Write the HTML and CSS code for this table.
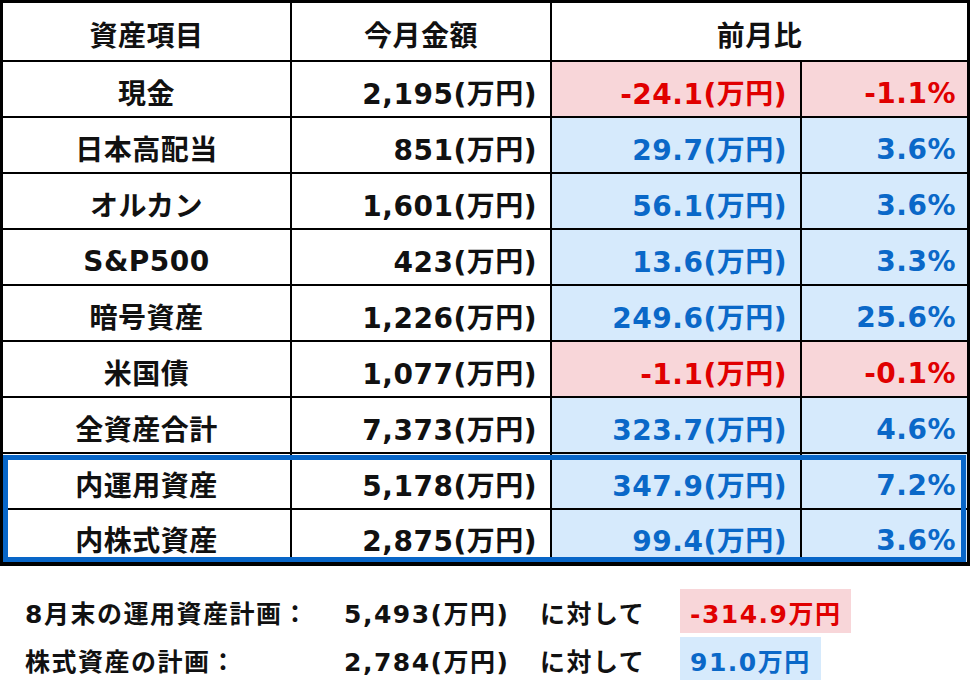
FILE: index.html
```html
<!DOCTYPE html>
<html lang="ja">
<head>
<meta charset="utf-8">
<title>資産推移</title>
<link rel="stylesheet" href="styles.css">
</head>
<body>
<div class="sheet">
  <div class="grid">
    <div class="cell head c">資産項目</div>
    <div class="cell head c">今月金額</div>
    <div class="cell head c span2">前月比</div>

    <div class="cell c">現金</div>
    <div class="cell r">2,195(万円)</div>
    <div class="cell r neg">-24.1(万円)</div>
    <div class="cell r pct neg">-1.1%</div>

    <div class="cell c">日本高配当</div>
    <div class="cell r">851(万円)</div>
    <div class="cell r pos">29.7(万円)</div>
    <div class="cell r pct pos">3.6%</div>

    <div class="cell c">オルカン</div>
    <div class="cell r">1,601(万円)</div>
    <div class="cell r pos">56.1(万円)</div>
    <div class="cell r pct pos">3.6%</div>

    <div class="cell c latin">S&amp;P500</div>
    <div class="cell r">423(万円)</div>
    <div class="cell r pos">13.6(万円)</div>
    <div class="cell r pct pos">3.3%</div>

    <div class="cell c">暗号資産</div>
    <div class="cell r">1,226(万円)</div>
    <div class="cell r pos">249.6(万円)</div>
    <div class="cell r pct pos">25.6%</div>

    <div class="cell c">米国債</div>
    <div class="cell r">1,077(万円)</div>
    <div class="cell r neg">-1.1(万円)</div>
    <div class="cell r pct neg">-0.1%</div>

    <div class="cell c">全資産合計</div>
    <div class="cell r">7,373(万円)</div>
    <div class="cell r pos">323.7(万円)</div>
    <div class="cell r pct pos">4.6%</div>

    <div class="cell c">内運用資産</div>
    <div class="cell r">5,178(万円)</div>
    <div class="cell r pos">347.9(万円)</div>
    <div class="cell r pct pos">7.2%</div>

    <div class="cell c">内株式資産</div>
    <div class="cell r">2,875(万円)</div>
    <div class="cell r pos">99.4(万円)</div>
    <div class="cell r pct pos">3.6%</div>
  </div>
  <div class="highlight"></div>
</div>

<div class="plan">
  <div class="plan-label">8月末の運用資産計画：</div>
  <div class="plan-value">5,493(万円)</div>
  <div class="plan-vs">に対して</div>
  <div class="plan-diff"><span class="badge neg-badge">-314.9万円</span></div>

  <div class="plan-label">株式資産の計画：</div>
  <div class="plan-value">2,784(万円)</div>
  <div class="plan-vs">に対して</div>
  <div class="plan-diff"><span class="badge pos-badge">91.0万円</span></div>
</div>
</body>
</html>
```

FILE: styles.css
```css
html, body {
  margin: 0;
  padding: 0;
  background: #ffffff;
}

body {
  width: 970px;
  height: 691px;
  overflow: hidden;
  font-family: "DejaVu Sans", "Noto Sans CJK JP", sans-serif;
  font-weight: bold;
  color: #111111;
}

.sheet {
  position: relative;
  width: 970px;
}

.grid {
  display: grid;
  grid-template-columns: 287px 258px 248px 165px;
  grid-template-rows: 57px repeat(8, 54px) 52px;
  gap: 2px;
  padding: 3px 3px 4px 3px;
  background: #000000;
  box-sizing: border-box;
  width: 970px;
}

.cell {
  background: #ffffff;
  display: flex;
  align-items: center;
  font-size: 28px;
  letter-spacing: 0.5px;
  padding-top: 5px;
  box-sizing: border-box;
  white-space: nowrap;
}

.cell.head {
  padding-top: 4px;
}

.cell.latin,
.cell.pct {
  padding-top: 8px;
}

.c {
  justify-content: center;
}

.r {
  justify-content: flex-end;
  padding-right: 13px;
}

.r.pct {
  padding-right: 11px;
}

.span2 {
  grid-column: span 2;
}

.neg {
  background: #f8d6d9;
  color: #e00000;
}

.pos {
  background: #d6eafc;
  color: #0a68c8;
}

.highlight {
  position: absolute;
  left: 3px;
  top: 455px;
  width: 963px;
  height: 107px;
  border: 5px solid #0866c8;
  box-sizing: border-box;
  pointer-events: none;
}

.plan {
  display: grid;
  grid-template-columns: 319px 196px 140px auto;
  grid-template-rows: 44px 43px;
  row-gap: 4px;
  margin: 23px 0 0 25px;
  font-size: 25px;
  letter-spacing: 1.5px;
  align-items: center;
  white-space: nowrap;
}

.plan-label,
.plan-value,
.plan-vs {
  padding-top: 2px;
}

.plan-diff {
  display: flex;
  height: 100%;
}

.badge {
  display: flex;
  align-items: center;
  padding: 2px 10px 0 10px;
}

.neg-badge {
  background: #f8d6d9;
  color: #e00000;
}

.pos-badge {
  background: #d6eafc;
  color: #0a68c8;
}
```
